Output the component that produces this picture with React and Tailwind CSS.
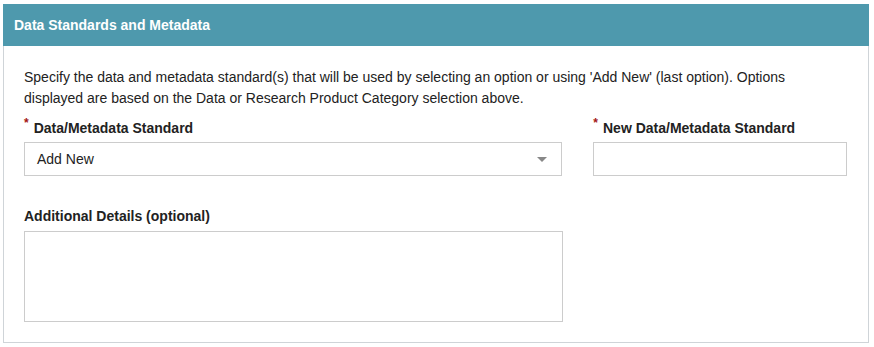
import React from "react";

const font = { fontFamily: '"Liberation Sans", Arial, sans-serif' };

const Label = ({ children, required, className = "mb-[4px]" }) => (
  <label className={`flex items-start text-[14px] font-bold text-[#222] leading-[20px] ${className}`}>
    {required && (
      <span className="text-[#a31515] text-[12px] leading-[12px] mr-[5px] -mt-[1px]">*</span>
    )}
    <span>{children}</span>
  </label>
);

export default function App() {
  return (
    <div className="pt-[4px] pl-[3px] pr-[5px] bg-white" style={font}>
      <div className="w-[866px] border border-[#cfd4d8] border-t-0">
        {/* Header */}
        <div className="bg-[#4e99ad] h-[42px] flex items-center px-[11px] -mx-px">
          <h2 className="text-white text-[14px] font-bold">Data Standards and Metadata</h2>
        </div>

        {/* Body */}
        <div className="pl-[20px] pr-[21px] pt-[21px] pb-[20px]">
          <p className="text-[14px] leading-[21px] text-[#222] mb-[9px]">
            Specify the data and metadata standard(s) that will be used by selecting an option or
            using 'Add New' (last option). Options displayed are based on the Data or Research
            Product Category selection above.
          </p>

          <div className="flex gap-[31px]">
            <div className="w-[539px]">
              <Label required>Data/Metadata Standard</Label>
              <div className="h-[34px] border border-[#cccccc] flex items-center justify-between pl-[12px] pr-[14px]">
                <span className="text-[14px] text-[#222]">Add New</span>
                <span className="w-0 h-0 border-l-[5px] border-r-[5px] border-t-[5px] border-l-transparent border-r-transparent border-t-[#888]" />
              </div>
            </div>
            <div className="w-[254px]">
              <Label required>New Data/Metadata Standard</Label>
              <div className="h-[34px] border border-[#cccccc]" />
            </div>
          </div>

          <div className="w-[539px] mt-[30px]">
            <Label className="mb-[5px]">Additional Details (optional)</Label>
            <div className="h-[91px] border border-[#cccccc]" />
          </div>
        </div>
      </div>
    </div>
  );
}
